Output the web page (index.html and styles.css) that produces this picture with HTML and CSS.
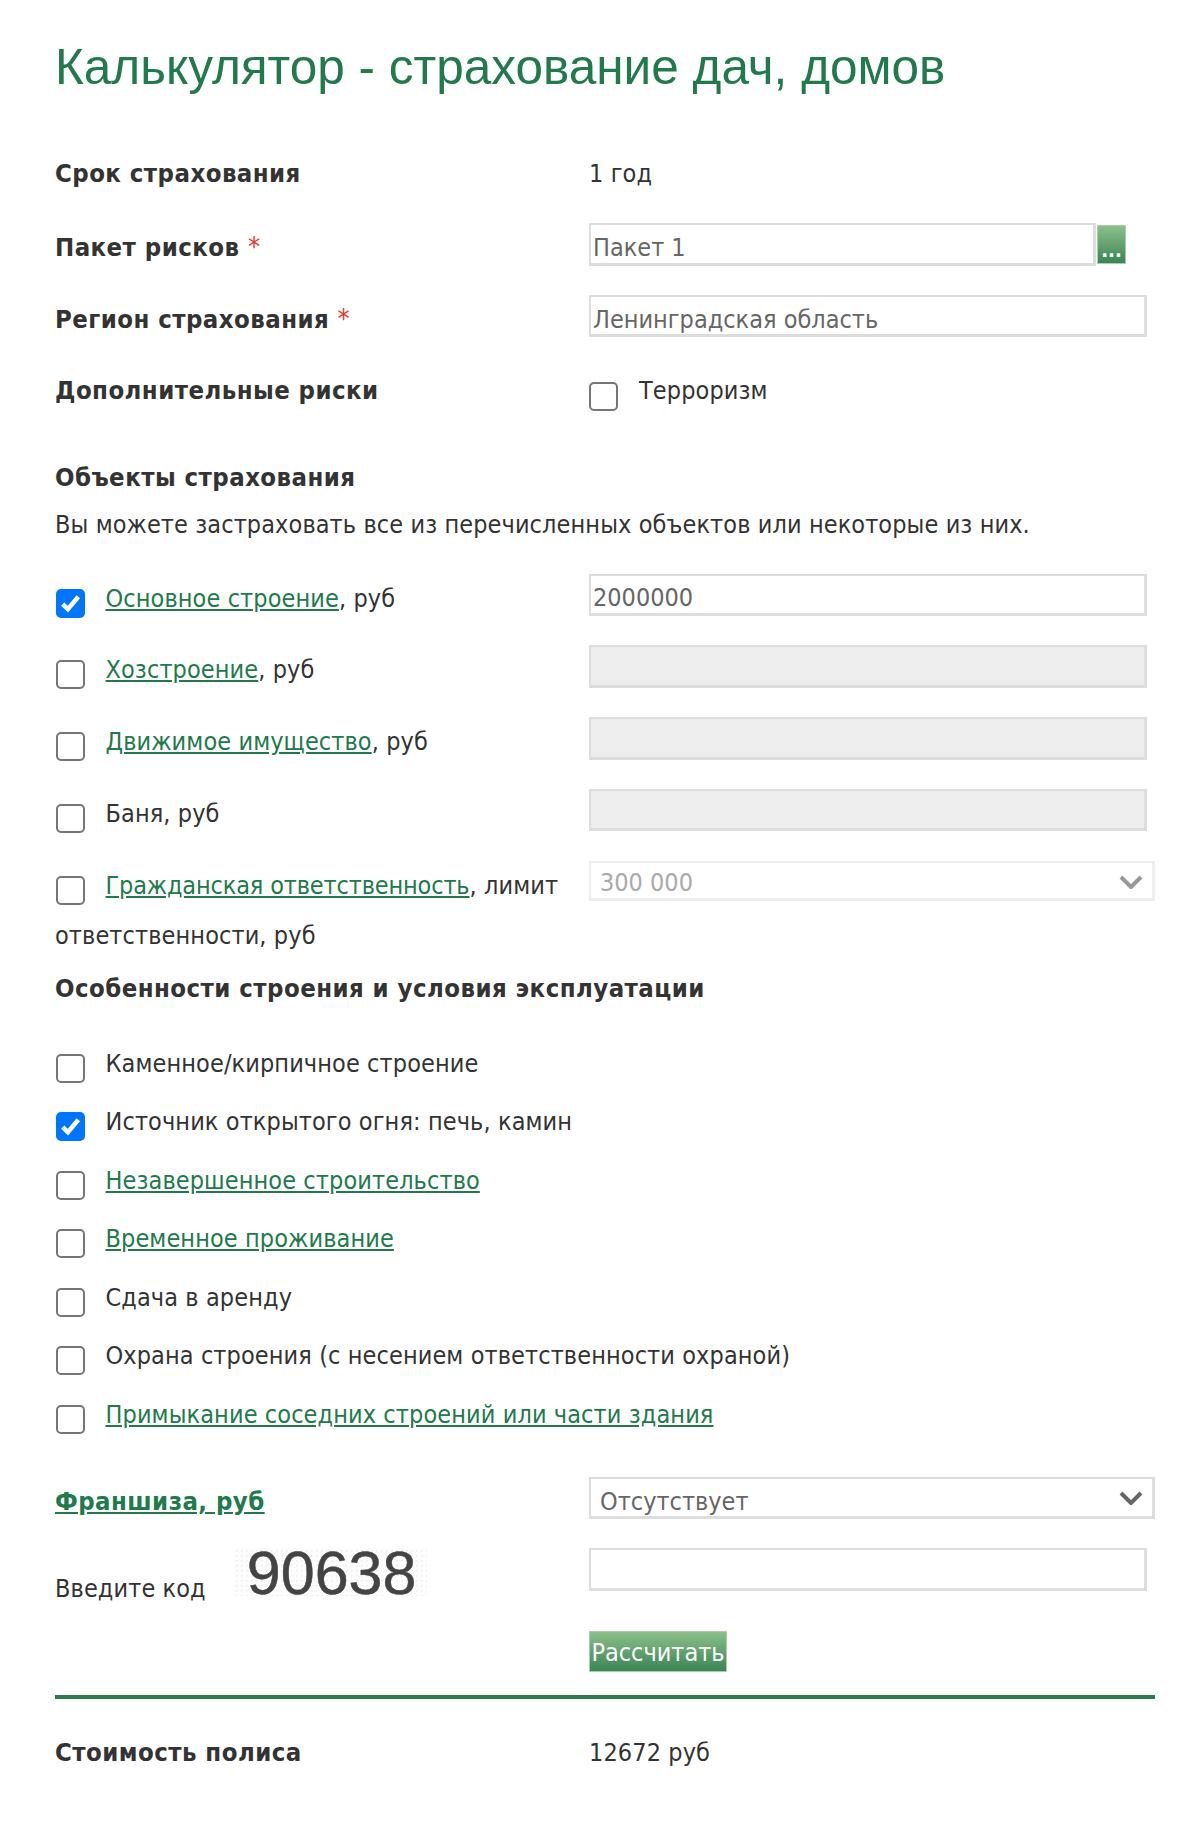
FILE: index.html
```html
<!DOCTYPE html>
<html>
<head>
    <meta charset="UTF-8">
    <title>Калькулятор</title>
    <link rel="stylesheet" href="styles.css">
</head>
<body>
    <form class="calc">
        <h1>Калькулятор - страхование дач, домов</h1>

        <div class="row row-plain">
            <div class="name">Срок страхования</div>
            <div>1 год</div>
        </div>
        <div class="row">
            <div class="name name-field">Пакет рисков <span class="req">*</span></div>
            <div class="pick">
                <input type="text" class="field field-short" value="Пакет 1">
                <button type="button" class="pick-button">...</button>
            </div>
        </div>
        <div class="row">
            <div class="name name-field">Регион страхования <span class="req">*</span></div>
            <input type="text" class="field" value="Ленинградская область">
        </div>
        <div class="row row-extra">
            <div class="name name-extra">Дополнительные риски</div>
            <label class="check-line"><input type="checkbox" class="check">Терроризм</label>
        </div>

        <div class="name section">Объекты страхования</div>
        <p class="note">Вы можете застраховать все из перечисленных объектов или некоторые из них.</p>

        <div class="row row-object">
            <div class="check-line"><input type="checkbox" class="check" checked><a href="#">Основное строение</a>, руб</div>
            <input type="text" class="field" value="2000000">
        </div>
        <div class="row row-object">
            <div class="check-line"><input type="checkbox" class="check"><a href="#">Хозстроение</a>, руб</div>
            <input type="text" class="field" disabled>
        </div>
        <div class="row row-object">
            <div class="check-line"><input type="checkbox" class="check"><a href="#">Движимое имущество</a>, руб</div>
            <input type="text" class="field" disabled>
        </div>
        <div class="row row-object">
            <div class="check-line"><input type="checkbox" class="check">Баня, руб</div>
            <input type="text" class="field" disabled>
        </div>
        <div class="row row-liability">
            <div class="check-line"><input type="checkbox" class="check"><a href="#" class="link-tight">Гражданская ответственность</a>, лимит ответственности, руб</div>
            <div class="select-wrap select-off">
                <select class="select" disabled><option>300 000</option></select>
                <svg class="chevron" viewBox="0 0 24 14"><path d="M2 2 L12 12 L22 2" fill="none" stroke="currentColor" stroke-width="4"/></svg>
            </div>
        </div>

        <div class="name section-wide">Особенности строения и условия эксплуатации</div>
        <div class="options">
            <div class="check-line"><input type="checkbox" class="check">Каменное/кирпичное строение</div>
            <div class="check-line"><input type="checkbox" class="check" checked>Источник открытого огня: печь, камин</div>
            <div class="check-line"><input type="checkbox" class="check"><a href="#">Незавершенное строительство</a></div>
            <div class="check-line"><input type="checkbox" class="check"><a href="#">Временное проживание</a></div>
            <div class="check-line"><input type="checkbox" class="check">Сдача в аренду</div>
            <div class="check-line"><input type="checkbox" class="check">Охрана строения (с несением ответственности охраной)</div>
            <div class="check-line"><input type="checkbox" class="check"><a href="#">Примыкание соседних строений или части здания</a></div>
        </div>

        <div class="row">
            <div class="name franchise"><a href="#">Франшиза, руб</a></div>
            <div class="select-wrap">
                <select class="select"><option>Отсутствует</option></select>
                <svg class="chevron" viewBox="0 0 24 14"><path d="M2 2 L12 12 L22 2" fill="none" stroke="currentColor" stroke-width="4"/></svg>
            </div>
        </div>
        <div class="row row-code">
            <div class="code">
                <span class="code-label">Введите код</span>
                <span class="captcha">90638</span>
            </div>
            <input type="text" class="field">
        </div>
        <div class="row row-submit">
            <div></div>
            <div><button type="button" class="submit">Рассчитать</button></div>
        </div>

        <div class="line"></div>

        <div class="row row-plain">
            <div class="name">Стоимость полиса</div>
            <div>12672 руб</div>
        </div>
    </form>
</body>
</html>
```

FILE: styles.css
```css
body {
    margin: 0;
    background-color: #fff;
    color: #333;
    font-family: "DejaVu Sans Condensed", "DejaVu Sans", sans-serif;
    font-size: 25px;
    letter-spacing: 0.1px;
    line-height: 34px;
}

a {
    color: #217a4c;
}

.link-tight {
    letter-spacing: -0.15px;
}

h1 {
    margin: 0 0 62px;
    font-family: "Liberation Sans", Arial, sans-serif;
    font-size: 49.5px;
    font-weight: normal;
    letter-spacing: 0;
    line-height: 56px;
    color: #217a4c;
}

.calc {
    width: 1100px;
    padding: 39px 45px 0 55px;
}

.row {
    display: grid;
    grid-template-columns: 534px 1fr;
    margin-bottom: 29.25px;
}

.row-plain {
    margin-bottom: 32px;
}

.row-extra {
    margin-bottom: 50px;
}

.row-object {
    margin-bottom: 21.75px;
}

.row-liability {
    margin-bottom: 11px;
}

.row-code {
    margin-bottom: 25px;
}

.row-submit {
    margin-bottom: 23px;
}

.name {
    padding-bottom: 2px;
    font-size: 25.5px;
    font-weight: bold;
    letter-spacing: 0.45px;
    line-height: 32px;
}

.name-field {
    padding-top: 8px;
}

.name-extra {
    padding-top: 7px;
}

.req {
    color: #e8352b;
    font-size: 27px;
    font-weight: normal;
    line-height: 0;
}

.section {
    margin-bottom: 13px;
}

.note {
    margin: 0 0 32px;
}

.section-wide {
    margin-bottom: 33px;
}

.field {
    box-sizing: border-box;
    display: block;
    width: 558px;
    height: 42.5px;
    margin: 0;
    padding: 7px 1px 0 2px;
    border: 3px solid #ddd;
    border-width: 2px 3px 3px 2px;
    background-color: #fff;
    color: #666;
    font-family: inherit;
    font-size: 25px;
    outline: none;
}

.field:disabled {
    background-color: #eee;
}

.field-short {
    width: 507px;
}

.pick {
    display: flex;
    align-items: flex-start;
}

.pick-button {
    box-sizing: border-box;
    width: 29px;
    height: 39px;
    margin: 2px 0 0 1px;
    padding: 0;
    border: 1px solid #a9cfa9;
    background: linear-gradient(#8cbf8b, #3b8555);
    color: #fff;
    font-family: inherit;
    font-size: 20px;
    font-weight: bold;
    line-height: 48px;
    text-align: center;
}

.check-line {
    display: block;
    line-height: 50px;
}

.check {
    box-sizing: border-box;
    float: left;
    width: 29px;
    height: 29px;
    margin: 15px 21px 0 0.5px;
    border: 2.4px solid #767676;
    border-radius: 5px;
    background-color: #fff;
    appearance: none;
}

.check:checked {
    border-color: #0075ff;
    background-color: #0075ff;
    background-image: url("data:image/svg+xml,%3Csvg xmlns='http://www.w3.org/2000/svg' viewBox='0 0 24 24'%3E%3Cpath d='M4.5 12.5 L9.5 17.5 L19.5 5.5' fill='none' stroke='%23fff' stroke-width='4.4'/%3E%3C/svg%3E");
    background-size: 100% 100%;
}

.options .check-line {
    margin-bottom: 8.6px;
}

.options {
    margin-bottom: 37.1px;
}

.row-extra .check-line {
    line-height: 34px;
    margin-top: 7px;
}

.row-extra .check {
    margin-top: 8px;
    margin-left: 0;
}

.select-wrap {
    position: relative;
    width: 566px;
}

.select {
    box-sizing: border-box;
    display: block;
    width: 100%;
    height: 42px;
    margin: 0;
    padding: 8px 0 0 9px;
    border: 3px solid #ddd;
    border-width: 2px 3px 3px 2px;
    border-radius: 0;
    background-color: #fff;
    color: #666;
    font-family: inherit;
    font-size: 25px;
    appearance: none;
    opacity: 1;
}

.select-off .select {
    height: 40px;
    padding-top: 5px;
    border-color: #eee;
    color: #aaa;
}

.chevron {
    position: absolute;
    top: 14px;
    right: 12px;
    width: 24px;
    height: 14px;
    color: #666;
}

.select-off .chevron {
    color: #999;
}

.franchise {
    padding-top: 8px;
}

.code {
    display: flex;
    align-items: flex-end;
    gap: 28px;
}

.code-label {
    display: block;
}

.captcha {
    display: block;
    width: 193px;
    height: 48px;
    margin-bottom: 10px;
    padding-left: 13px;
    box-sizing: border-box;
    background-color: #fdfdfd;
    background-image: radial-gradient(#f1f1f1 1px, transparent 1px);
    background-size: 5px 5px;
    color: #444;
    -webkit-text-stroke: 0.5px #444;
    font-family: "Liberation Sans", Arial, sans-serif;
    font-size: 61px;
    letter-spacing: 0;
    line-height: 50px;
}

.submit {
    box-sizing: border-box;
    display: block;
    width: 138px;
    height: 41px;
    padding: 2px 0 0;
    border: 1px solid #a9cfa9;
    background: linear-gradient(#8cbf8b, #3b8555);
    color: #fff;
    font-family: inherit;
    font-size: 25px;
    line-height: 34px;
}

.line {
    height: 4px;
    margin-bottom: 37px;
    background-color: #2a7a4f;
}
```
